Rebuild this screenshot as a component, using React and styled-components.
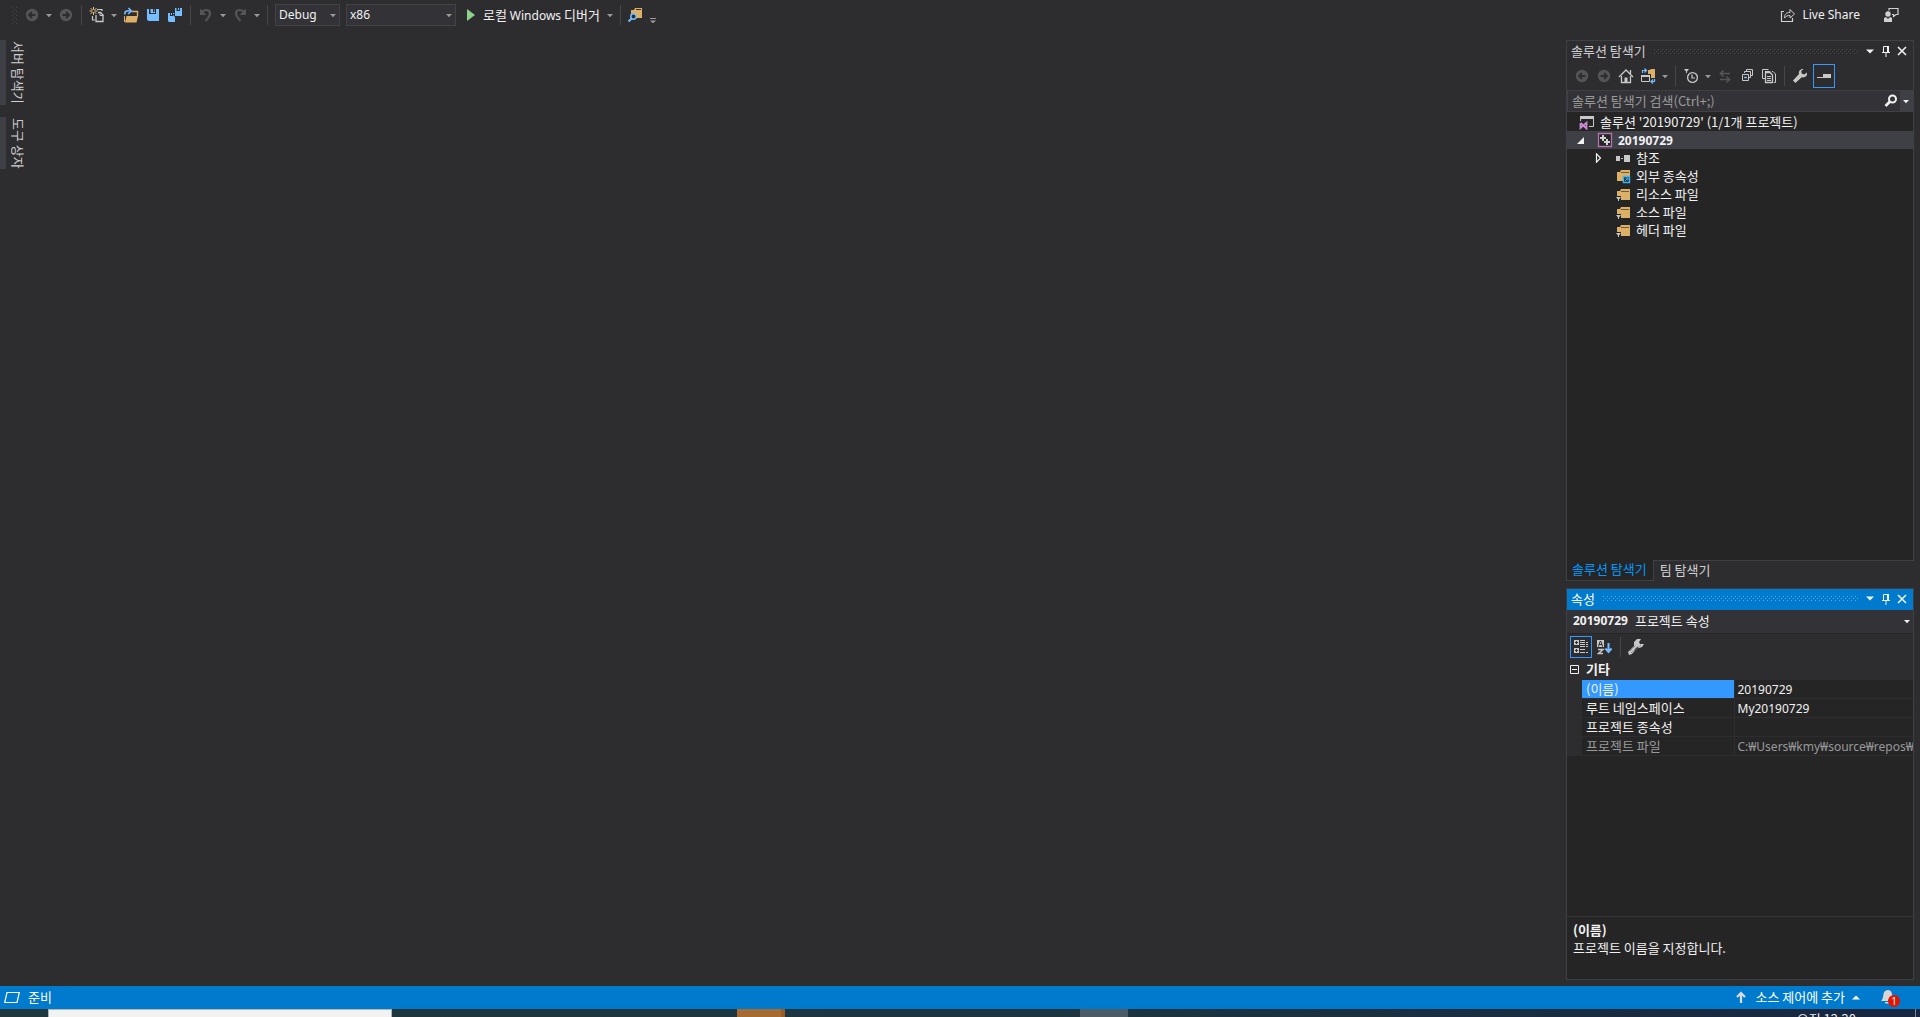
import React from "react";
import styled, { createGlobalStyle, css } from "styled-components";

const GlobalStyle = createGlobalStyle`
  * {
    box-sizing: border-box;
  }

  body {
    margin: 0;
    overflow: hidden;
    background: #2d2d30;
    color: #f1f1f1;
    font: 13px/18px "Noto Sans CJK KR", "Noto Sans", sans-serif;
  }

  button,
  input,
  select {
    margin: 0;
    padding: 0;
    border: 0;
    border-radius: 0;
    background: none;
    color: inherit;
    font: inherit;
  }

  ul {
    margin: 0;
    padding: 0;
    list-style: none;
  }
`;

const Page = styled.div`
  display: flex;
  flex-direction: column;
  height: 100vh;
  overflow: hidden;
`;

const Latin = styled.span`
  font-family: "Noto Sans", sans-serif;
  font-size: 12px;
  line-height: 12px;
`;

/* ---------- toolbars ---------- */

const Toolbar = styled.div`
  display: flex;
  align-items: center;
  flex: none;
  gap: 4px;
  height: ${({ $height }) => $height}px;
  padding: 0 ${({ $inset }) => $inset || 6}px;
`;

const MainToolbar = styled(Toolbar)`
  padding: 0 20px 0 12px;
`;

const dots = css`
  background-image: conic-gradient(from 270deg at 1px 1px, ${({ $dot }) => $dot} 90deg, transparent 0),
    conic-gradient(from 270deg at 1px 1px, ${({ $dot }) => $dot} 90deg, transparent 0);
  background-size: 4px 4px;
  background-position: 0 0, 2px 2px;
`;

const ToolbarGrip = styled.span`
  width: 5px;
  height: 17px;
  margin-right: 2px;
  ${dots}
`;

const IconButton = styled.button`
  display: flex;
  align-items: center;
  justify-content: center;
  flex: none;
  width: ${({ $width }) => $width || 18}px;
  height: 22px;
`;

const ToggleButton = styled(IconButton)`
  width: 22px;
  height: ${({ $height }) => $height || 24}px;
  border: 1px solid #3399ff;
`;

const Separator = styled.span`
  flex: none;
  width: 1px;
  height: 20px;
  margin: 0 2px;
  background: #46464a;
`;

const Combo = styled.label`
  display: grid;
  align-items: center;
  width: ${({ $width }) => $width}px;
  height: 22px;
  margin: 0 1px;
  border: 1px solid #434346;
  background: #333337;

  select,
  svg {
    grid-area: 1 / 1;
  }

  select {
    width: 100%;
    height: 20px;
    padding-left: 3px;
    appearance: none;
    font: 12px/18px "Noto Sans", sans-serif;
  }

  svg {
    justify-self: end;
    margin-right: 2px;
    pointer-events: none;
  }
`;

const TextButton = styled.button`
  display: flex;
  align-items: center;
  gap: 6px;
  height: 22px;
  padding-left: 6px;
  white-space: nowrap;
`;

const AccountArea = styled.div`
  display: flex;
  align-items: center;
  gap: 22px;
  margin-left: auto;
`;

/* ---------- work area ---------- */

const Main = styled.main`
  display: flex;
  flex: 1;
  min-height: 0;
  padding: 10px 6px 6px 0;
`;

const Rail = styled.nav`
  display: flex;
  flex-direction: column;
  gap: 12px;
`;

const RailTab = styled.button`
  padding: 1px 0 1px 4px;
  border-left: 6px solid #3f3f46;
  color: #d0d0d0;
  line-height: 16px;
  writing-mode: vertical-rl;
  text-orientation: sideways;
  text-align: left;
`;

const Documents = styled.div`
  flex: 1;
`;

const Dock = styled.aside`
  display: flex;
  flex-direction: column;
  gap: 6px;
  width: 348px;
`;

const DockGroup = styled.section`
  display: flex;
  flex-direction: column;
  flex: ${({ $share }) => $share} 1 0;
  min-height: 0;
`;

const Panel = styled.div`
  display: flex;
  flex-direction: column;
  flex: 1;
  min-height: 0;
  border: 1px solid #3f3f46;
`;

const PanelTitle = styled.header`
  display: flex;
  align-items: center;
  flex: none;
  height: 21px;
  padding: 0 3px 1px 4px;
  background: ${({ $active }) => ($active ? "#007acc" : "transparent")};
  color: ${({ $active }) => ($active ? "#ffffff" : "#d0d0d0")};
`;

const Grip = styled.span`
  flex: 1;
  height: 5px;
  margin: 0 4px 0 8px;
  ${dots}
`;

const SearchBox = styled.label`
  display: flex;
  align-items: center;
  flex: none;
  height: 22px;
  border: 1px solid #3f3f46;
  background: #333337;

  input {
    flex: 1;
    min-width: 0;
    height: 18px;
    padding-left: 4px;
    outline: none;
  }

  input::placeholder {
    color: #999999;
    opacity: 1;
  }
`;

const SearchOptions = styled(IconButton)`
  width: 12px;
  height: 20px;
  background: #3f3f46;
`;

const Tree = styled.ul`
  flex: 1;
  padding-top: 1px;
  background: #252526;
`;

const TreeRow = styled.li`
  display: flex;
  align-items: center;
  gap: 5px;
  height: 18px;
  padding-left: ${({ $depth }) => ($depth ? 18 * $depth - 9 : 12)}px;
  background: ${({ $selected }) => ($selected ? "#3f3f46" : "transparent")};
  font-weight: ${({ $selected }) => ($selected ? 700 : 400)};
  white-space: nowrap;
`;

const Twisty = styled.span`
  display: flex;
  align-items: center;
  width: 16px;
`;

const Tabs = styled.div`
  display: flex;
  flex: none;
  height: 21px;
`;

const Tab = styled.button`
  height: 21px;
  margin-top: ${({ $active }) => ($active ? -1 : 0)}px;
  padding: 0 6px 2px 5px;
  border: 1px solid ${({ $active }) => ($active ? "#3f3f46" : "transparent")};
  border-top: 0;
  background: ${({ $active }) => ($active ? "#252526" : "transparent")};
  color: ${({ $active }) => ($active ? "#0097fb" : "#d0d0d0")};
`;

/* ---------- properties ---------- */

const ObjectPicker = styled.button`
  display: flex;
  align-items: center;
  flex: none;
  gap: 7px;
  height: 24px;
  padding: 0 2px 0 6px;
  border-bottom: 1px solid #252526;
  background: #333337;

  svg {
    margin-left: auto;
  }
`;

const GridArea = styled.div`
  flex: 1;
  min-height: 0;
  overflow: hidden;
  background: #252526;
`;

const PropertyTable = styled.table`
  width: 100%;
  table-layout: fixed;
  border-collapse: collapse;
  text-align: left;
  white-space: nowrap;

  th,
  td {
    overflow: hidden;
    height: 19px;
    padding: 0 0 0 4px;
    border-bottom: 1px solid #2d2d30;
    font-weight: 400;
    line-height: 18px;
  }
`;

const GutterColumn = styled.col`
  width: 15px;
`;

const NameColumn = styled.col`
  width: 152px;
`;

const CategoryRow = styled.tr`
  background: #2d2d30;

  th {
    height: 20px;
    font-weight: 700;
  }

  td {
    padding: 0 0 0 3px;
  }
`;

const Expander = styled.button`
  display: block;
  height: 9px;
  line-height: 0;
`;

const PropertyRow = styled.tr`
  color: ${({ $dim }) => ($dim ? "#999999" : "#f1f1f1")};

  td:first-child {
    background: #2d2d30;
  }

  td:last-child {
    padding-left: 3px;
  }

  th {
    border-right: 1px solid #2d2d30;
    background: ${({ $selected }) => ($selected ? "#3399ff" : "#252526")};
  }
`;

const Description = styled.div`
  flex: none;
  height: 63px;
  padding: 4px 6px;
  border-top: 1px solid #333337;
  background: #252526;

  strong {
    display: block;
  }
`;

/* ---------- bottom bars ---------- */

const StatusBar = styled.footer`
  display: flex;
  align-items: center;
  flex: none;
  gap: 8px;
  height: 23px;
  padding: 0 20px 1px 4px;
  background: #007acc;
  color: #ffffff;
`;

const StatusButton = styled.button`
  display: flex;
  align-items: center;
  gap: 7px;
  height: 22px;
  margin-left: auto;
`;

const BellButton = styled.button`
  position: relative;
  width: 20px;
  height: 20px;
  margin-left: 12px;
  line-height: 0;
  text-align: left;
`;

const Badge = styled.span`
  position: absolute;
  right: 0;
  bottom: 0;
  width: 12px;
  height: 12px;
  border-radius: 6px;
  background: #e51400;
  font: 10px/12px "Noto Sans", sans-serif;
  text-align: center;
`;

const Taskbar = styled.div`
  display: flex;
  flex: none;
  height: 8px;
  overflow: hidden;
  background: linear-gradient(90deg, #21373e, #1e3540 55%, #18263f);
`;

const TaskSearch = styled.input`
  width: 344px;
  height: 40px;
  margin-left: 48px;
  border: 1px solid #b4b4b4;
  background: #f2f2f2;
`;

const TaskButton = styled.button`
  width: 48px;
  height: 40px;
  margin-left: ${({ $before }) => $before}px;
  border-right: ${({ $edge }) => ($edge ? `4px solid ${$edge}` : 0)};
  background: ${({ $color }) => $color};
`;

const Clock = styled.time`
  height: 40px;
  margin-left: auto;
  padding: 2px 59px 0 0;
  line-height: 16px;
`;

const ShowDesktop = styled.button`
  width: 5px;
  height: 40px;
  border-left: 1px solid #7d8794;
`;

/* ---------- icons ---------- */

const Icon = ({ size = 16, children }) => (
  <svg width={size} height={size} viewBox={`0 0 ${size} ${size}`} fill="none" aria-hidden="true">
    {children}
  </svg>
);

const Caret = ({ color = "#999999", up, wide }) => (
  <svg width="8" height="5" viewBox="0 0 8 5" aria-hidden="true">
    <path d={up ? "M0 4.500L4 .5l4 4z" : wide ? "M0 .5h8l-4 4z" : "M1 1h6L4 4.200z"} fill={color} />
  </svg>
);

const ArrowCircle = ({ right }) => (
  <Icon>
    <circle cx="8" cy="8" r="6.200" fill="#555558" />
    <path
      d={right ? "M4.500 8h6M8 5l3 3-3 3" : "M11.500 8h-6M8 5L5 8l3 3"}
      stroke="#2d2d30"
      strokeWidth="1.800"
    />
  </Icon>
);

const NewIcon = () => (
  <Icon>
    <path d="M8 2.500h5V4M3.500 9v4H6" stroke="#c8c8c8" strokeWidth="1.200" />
    <path d="M7 8V14.500h7V8l-2.500-2.500H9" stroke="#c8c8c8" strokeWidth="1.300" />
    <path d="M11 5v3.500h3.500" stroke="#c8c8c8" />
    <path d="M4.500 0v8M.5 4h8M1.700 1.200l5.600 5.600M7.300 1.200L1.700 6.800" stroke="#f0c987" />
    <circle cx="4.500" cy="4" r="1.200" fill="#2d2d30" />
  </Icon>
);

const OpenIcon = () => (
  <Icon>
    <path d="M9 4.500h5.500V9" stroke="#dcb067" strokeWidth="1.400" />
    <path d="M1.500 15V9" stroke="#dcb067" />
    <path d="M3.500 9H15l-1.500 6.500H2z" fill="#dcb067" />
    <path d="M2 7.500C1 4.500 4 3 8 4.200M5.500 1l3 3-3.500 3" stroke="#75beff" strokeWidth="1.500" />
  </Icon>
);

const SaveIcon = () => (
  <Icon>
    <path d="M2 2h2v5h7V2h3v12H3.500L2 12.500z" fill="#75beff" />
    <path d="M5.500 2H8v2h1V2h1v4H5.500z" fill="#75beff" />
    <path d="M8 2h1.500v3H8z" fill="#2d2d30" />
  </Icon>
);

const SaveAllIcon = () => (
  <Icon>
    <path d="M1 6h2v3h3V6h2v9H2l-1-1z" fill="#75beff" />
    <path d="M8 1h1.500v3H13V1h2v8H8z" fill="#75beff" />
    <path d="M4 6h1v2H4zM11 1h1v2h-1z" fill="#75beff" />
    <path d="M5.500 7.500L8 10V6z" fill="#2d2d30" />
  </Icon>
);

const UndoIcon = ({ flip }) => (
  <Icon>
    <g transform={flip ? "translate(16 0) scale(-1 1)" : undefined}>
      <path d="M3.500 5.500C6 2 12 2 12 6.500c0 3-2 4.500-4.500 7.500" stroke="#555558" strokeWidth="2.200" />
      <path d="M2 1.500V8h6.500z" fill="#555558" />
    </g>
  </Icon>
);

const PlayIcon = () => (
  <svg width="10" height="14" viewBox="0 0 10 14" aria-hidden="true">
    <path d="M0 1l8 6-8 6z" fill="#8dd28a" />
  </svg>
);

const FindInFilesIcon = () => (
  <Icon>
    <path d="M3 3h3l1-2h7v10H3z" fill="#dcb067" />
    <path d="M8 2.500h5" stroke="#2d2d30" />
    <circle cx="5.500" cy="9.500" r="2.700" fill="#2d2d30" stroke="#75beff" strokeWidth="1.500" />
    <path d="M3.700 11.500L.5 14.500" stroke="#75beff" strokeWidth="2" />
  </Icon>
);

const OverflowIcon = () => (
  <svg width="8" height="16" viewBox="0 0 8 16" aria-hidden="true">
    <path d="M1 11.500h6" stroke="#999999" />
    <path d="M1 13.500h6L4 16.500z" fill="#999999" />
  </svg>
);

const ShareIcon = () => (
  <Icon>
    <path d="M4 4.500H1.500v10h11V11" stroke="#d0d0d0" strokeWidth="1.200" />
    <path d="M4.500 11c0-4 2-5.500 5.500-5.500V2.500l4.500 4.500-4.500 4V8.500C7.500 8.500 6 9 4.500 11z" stroke="#d0d0d0" />
  </Icon>
);

const FeedbackIcon = () => (
  <Icon>
    <circle cx="5" cy="7" r="2.700" fill="#d0d0d0" />
    <path d="M1 15v-4l2-1 2 2 2-2 2 1v4z" fill="#d0d0d0" />
    <path d="M6 3.500v-2h9v6h-2l-2.500 2V7.500H9" stroke="#d0d0d0" strokeWidth="1.200" />
  </Icon>
);

const PinIcon = () => (
  <Icon size={12}>
    <path d="M3.500 7V1.500h5V7M2 7.500h8M6 8v4" stroke="#f1f1f1" />
    <path d="M7 1h2v6H7z" fill="#f1f1f1" />
  </Icon>
);

const CloseIcon = () => (
  <Icon size={12}>
    <path d="M2 2l8 8M10 2l-8 8" stroke="#f1f1f1" strokeWidth="1.600" />
  </Icon>
);

const HomeIcon = () => (
  <Icon>
    <path d="M1 9l7-7 7 7M12.500 6V2" stroke="#c8c8c8" strokeWidth="1.300" />
    <path d="M3.500 8v6.500h9V8" stroke="#c8c8c8" strokeWidth="1.300" />
    <path d="M6.500 9.500h3V15h-3z" fill="#c8c8c8" />
  </Icon>
);

const SwitchViewIcon = () => (
  <Icon>
    <path d="M8 2h2l1-1h4v9h-4V6H8z" fill="#dcb067" />
    <path d="M1.500 7.500h8v6h-8z" stroke="#c8c8c8" />
    <path d="M1 7h9v2H1z" fill="#c8c8c8" />
    <path d="M2.500 5V2.500H6M4.500 .5l2 2-2 2M14.500 11v2.500H11M13 11.500l-2 2 2 2" stroke="#75beff" strokeWidth="1.200" />
  </Icon>
);

const PendingIcon = () => (
  <Icon>
    <path d="M1 1h5L4 3.500V5H3V3.500z" fill="#c8c8c8" />
    <circle cx="9.500" cy="9.500" r="4.900" stroke="#c8c8c8" strokeWidth="1.300" />
    <path d="M9 6.500V10h3" stroke="#c8c8c8" strokeWidth="1.200" />
  </Icon>
);

const SyncIcon = () => (
  <Icon>
    <path d="M13 5.500H4M6.500 2.500l-3 3 3 3M3 11.500h9M9.500 8.500l3 3-3 3" stroke="#555558" strokeWidth="1.700" />
  </Icon>
);

const CollapseIcon = () => (
  <Icon>
    <path d="M7.500 3V1.500h6v6H12M5.500 5V3.500h6v6H10M3.500 6.500h6v6h-6z" stroke="#c8c8c8" />
    <path d="M5 9.500h3" stroke="#75beff" strokeWidth="1.400" />
  </Icon>
);

const ShowAllIcon = () => (
  <Icon>
    <path d="M4 10.500H1.500v-9h6M4 3.500h5l1 1M11 3.500h1l2.500 2.500v8.500H13" stroke="#c8c8c8" />
    <path d="M4.500 4.500H9l2.500 2.500v7.500h-7z" stroke="#c8c8c8" strokeWidth="1.300" />
    <path d="M6 8.500h4M6 10.500h4M6 12.500h4" stroke="#c8c8c8" />
  </Icon>
);

const WrenchIcon = () => (
  <Icon>
    <path d="M14.800 4.500l-2.500 2-2.600-1-.4-2.400L11.500 1C8.500 .5 6.300 3 7 6L1 12.500 3.300 15l6.500-5.700c3.500 .8 6-1.800 5-4.800z" fill="#c8c8c8" />
  </Icon>
);

const PreviewIcon = () => (
  <Icon>
    <path d="M1 9.500h6" stroke="#c8c8c8" />
    <path d="M7 6h8v4H7z" fill="#c8c8c8" />
  </Icon>
);

const SearchIcon = () => (
  <Icon>
    <circle cx="9.500" cy="6" r="3.500" stroke="#f1f1f1" strokeWidth="2" />
    <path d="M7 8.500L2.500 13" stroke="#f1f1f1" strokeWidth="2.600" />
  </Icon>
);

const SolutionIcon = () => (
  <Icon>
    <path d="M1.500 7V2.500h13v10H10" stroke="#c8c8c8" />
    <path d="M1 2h14v3H1z" fill="#c8c8c8" />
    <path d="M1.500 9v5L7.500 8.700v5.800L1.500 9" stroke="#cb8ad6" strokeWidth="1.800" />
  </Icon>
);

const ProjectIcon = () => (
  <Icon>
    <path d="M1.500 1.500h13v13h-13z" fill="#252526" stroke="#b573b0" strokeWidth="1.300" />
    <path d="M3 6h6M6 3v6M7 10h6M10 7v6" stroke="#d0d0d0" strokeWidth="2" />
  </Icon>
);

const ReferencesIcon = () => (
  <Icon>
    <path d="M1 6h4v5H1zM9 5h6v7H9z" fill="#c8c8c8" />
    <path d="M6 8.500h2" stroke="#c8c8c8" />
  </Icon>
);

const FolderIcon = ({ external }) => (
  <Icon>
    <path d={external ? "M2 4h3l1-2h9v11H2z" : "M2 5h3l1-2h9v11H2z"} fill="#dcb067" />
    <path d={external ? "M6 4.500h8" : "M6 5.500h8"} stroke="#6b5a3c" />
    {external ? (
      <>
        <path d="M8.500 8.500h6v6h-6z" fill="#252526" stroke="#3db4f2" strokeWidth="1.400" />
        <path d="M10 13l3-3M10.500 10H13v2.500" stroke="#3db4f2" />
      </>
    ) : (
      <>
        <path d="M0 10h6v6H0z" fill="#252526" />
        <path d="M1 11h5L4 13.500V15H3v-1.500z" fill="#c8c8c8" />
      </>
    )}
  </Icon>
);

const ExpandedIcon = () => (
  <Icon size={9}>
    <path d="M8 1v7H1z" fill="#f1f1f1" />
  </Icon>
);

const CollapsedIcon = () => (
  <Icon size={10}>
    <path d="M2.500 .8v8.400L6.500 5z" stroke="#f1f1f1" strokeWidth="1.200" />
  </Icon>
);

const CategorizedIcon = () => (
  <Icon>
    <path d="M1 1h5v5H1zM1 9h5v5H1z" fill="#c8c8c8" />
    <path d="M2 3.500h3M3.500 2v3M2 11.500h3M3.500 10v3" stroke="#2d2d30" />
    <path d="M7 1.500h5M7 3.500h5M7 5.500h5M7 7.500h5M7 10.500h5M7 13.500h5M13 3.500h2M13 5.500h2M13 7.500h2M13 13.500h2" stroke="#c8c8c8" />
  </Icon>
);

const AlphabeticalIcon = () => (
  <Icon>
    <path d="M0 1h7v7H0z" fill="#c8c8c8" />
    <path d="M1.500 7.500L3 2.500h1l1.500 5M2 5.500h3" stroke="#2d2d30" />
    <path d="M1 10.500h5l-4.500 4H6" stroke="#c8c8c8" strokeWidth="1.500" />
    <path d="M11.500 4v9M8.500 9.500l3 3.500 3-3.500" stroke="#75beff" strokeWidth="2" />
  </Icon>
);

const PropertyPagesIcon = () => (
  <Icon>
    <path d="M16 5l-2 3-3 1-2-1-5 7-3 1-1-3 6-6V3l3-3h4l-2 3 1 2z" fill="#c8c8c8" />
    <path d="M3 14l7-7M5 14l8-8M2 12l6-6" stroke="#6b6b6e" strokeDasharray="1 1" />
  </Icon>
);

const MinusBox = () => (
  <Icon size={9}>
    <path d="M.5 .5h8v8h-8zM2 4.500h5" stroke="#f1f1f1" />
  </Icon>
);

const ReadyIcon = () => (
  <Icon>
    <path d="M3 3.500h12.300L13 13.500H.7z" stroke="#ffffff" strokeWidth="1.200" />
  </Icon>
);

const PublishIcon = () => (
  <Icon>
    <path d="M9 14V4M5 8l4-4 4 4" stroke="#dcdcdc" strokeWidth="2.200" />
  </Icon>
);

const BellIcon = () => (
  <Icon>
    <path d="M1 12c2-2 2-4 2.500-7C4 2 6 1 8 1s3.500 1 4 4l1 7zM5 13h5v1.500H5z" fill="#d6d6d6" />
  </Icon>
);

/* ---------- data ---------- */

const TREE = [
  { depth: 0, label: "솔루션 '20190729' (1/1개 프로젝트)", icon: <SolutionIcon /> },
  { depth: 1, label: <Latin>20190729</Latin>, icon: <ProjectIcon />, twisty: <ExpandedIcon />, selected: true },
  { depth: 2, label: "참조", icon: <ReferencesIcon />, twisty: <CollapsedIcon /> },
  { depth: 2, label: "외부 종속성", icon: <FolderIcon external /> },
  { depth: 2, label: "리소스 파일", icon: <FolderIcon /> },
  { depth: 2, label: "소스 파일", icon: <FolderIcon /> },
  { depth: 2, label: "헤더 파일", icon: <FolderIcon /> },
];

const PROPERTIES = [
  { name: "(이름)", value: "20190729", selected: true },
  { name: "루트 네임스페이스", value: "My20190729" },
  { name: "프로젝트 종속성", value: "" },
  { name: "프로젝트 파일", value: "C:₩Users₩kmy₩source₩repos₩2", dim: true },
];

const TitleBar = ({ title, active }) => (
  <PanelTitle $active={active}>
    {title}
    <Grip $dot={active ? "#59a8de" : "#46464a"} />
    <IconButton $width={16} aria-label="창 위치">
      <Caret color="#f1f1f1" wide />
    </IconButton>
    <IconButton $width={16} aria-label="자동 숨기기">
      <PinIcon />
    </IconButton>
    <IconButton $width={16} aria-label="닫기">
      <CloseIcon />
    </IconButton>
  </PanelTitle>
);

const Tool = ({ label, children }) => (
  <IconButton aria-label={label}>{children}</IconButton>
);

const More = ({ label }) => (
  <IconButton $width={8} aria-label={label}>
    <Caret />
  </IconButton>
);

const StandardToolbar = () => (
  <MainToolbar $height={30}>
    <ToolbarGrip $dot="#46464a" />
    <Tool label="뒤로">
      <ArrowCircle />
    </Tool>
    <More label="뒤로 목록" />
    <Tool label="앞으로">
      <ArrowCircle right />
    </Tool>
    <Separator />
    <Tool label="새 프로젝트">
      <NewIcon />
    </Tool>
    <More label="새로 만들기 목록" />
    <Tool label="파일 열기">
      <OpenIcon />
    </Tool>
    <Tool label="저장">
      <SaveIcon />
    </Tool>
    <Tool label="모두 저장">
      <SaveAllIcon />
    </Tool>
    <Separator />
    <Tool label="실행 취소">
      <UndoIcon />
    </Tool>
    <More label="실행 취소 목록" />
    <Tool label="다시 실행">
      <UndoIcon flip />
    </Tool>
    <More label="다시 실행 목록" />
    <Separator />
    <Combo $width={65}>
      <select aria-label="솔루션 구성" defaultValue="Debug">
        <option>Debug</option>
        <option>Release</option>
      </select>
      <Caret />
    </Combo>
    <Combo $width={110}>
      <select aria-label="솔루션 플랫폼" defaultValue="x86">
        <option>x86</option>
        <option>x64</option>
      </select>
      <Caret />
    </Combo>
    <TextButton>
      <PlayIcon />
      <span>
        로컬 <Latin>Windows</Latin> 디버거
      </span>
      <Caret />
    </TextButton>
    <Separator />
    <Tool label="파일에서 찾기">
      <FindInFilesIcon />
    </Tool>
    <IconButton $width={8} aria-label="도구 모음 옵션">
      <OverflowIcon />
    </IconButton>
    <AccountArea>
      <TextButton>
        <ShareIcon />
        <Latin>Live Share</Latin>
      </TextButton>
      <Tool label="피드백 보내기">
        <FeedbackIcon />
      </Tool>
    </AccountArea>
  </MainToolbar>
);

const SolutionExplorer = () => (
  <DockGroup $share={29}>
    <Panel>
      <TitleBar title="솔루션 탐색기" />
      <Toolbar $height={28}>
        <Tool label="뒤로">
          <ArrowCircle />
        </Tool>
        <Tool label="앞으로">
          <ArrowCircle right />
        </Tool>
        <Tool label="홈">
          <HomeIcon />
        </Tool>
        <Tool label="보기 전환">
          <SwitchViewIcon />
        </Tool>
        <More label="보기 목록" />
        <Separator />
        <Tool label="보류 중인 변경 내용 필터">
          <PendingIcon />
        </Tool>
        <More label="필터 목록" />
        <Tool label="활성 문서와 동기화">
          <SyncIcon />
        </Tool>
        <Tool label="모두 축소">
          <CollapseIcon />
        </Tool>
        <Tool label="모든 파일 표시">
          <ShowAllIcon />
        </Tool>
        <Separator />
        <Tool label="속성">
          <WrenchIcon />
        </Tool>
        <ToggleButton aria-label="선택한 항목 미리 보기" aria-pressed="true">
          <PreviewIcon />
        </ToggleButton>
      </Toolbar>
      <SearchBox>
        <input type="text" placeholder="솔루션 탐색기 검색(Ctrl+;)" aria-label="솔루션 탐색기 검색" />
        <Tool label="검색">
          <SearchIcon />
        </Tool>
        <SearchOptions aria-label="검색 옵션">
          <Caret color="#f1f1f1" />
        </SearchOptions>
      </SearchBox>
      <Tree>
        {TREE.map(({ depth, label, icon, twisty, selected }, index) => (
          <TreeRow key={index} $depth={depth} $selected={selected}>
            {depth > 0 && <Twisty>{twisty}</Twisty>}
            {icon}
            <span>{label}</span>
          </TreeRow>
        ))}
      </Tree>
    </Panel>
    <Tabs>
      <Tab $active>솔루션 탐색기</Tab>
      <Tab>팀 탐색기</Tab>
    </Tabs>
  </DockGroup>
);

const PropertiesWindow = () => (
  <DockGroup $share={21}>
    <Panel>
      <TitleBar title="속성" active />
      <ObjectPicker aria-haspopup="listbox">
        <Latin as="strong">20190729</Latin>
        <span>프로젝트 속성</span>
        <Caret color="#f1f1f1" />
      </ObjectPicker>
      <Toolbar $height={26} $inset={3}>
        <ToggleButton $height={22} aria-label="항목별" aria-pressed="true">
          <CategorizedIcon />
        </ToggleButton>
        <Tool label="사전순">
          <AlphabeticalIcon />
        </Tool>
        <Separator />
        <Tool label="속성 페이지">
          <PropertyPagesIcon />
        </Tool>
      </Toolbar>
      <GridArea>
        <PropertyTable>
          <colgroup>
            <GutterColumn />
            <NameColumn />
            <col />
          </colgroup>
          <tbody>
            <CategoryRow>
              <td>
                <Expander aria-label="기타 축소">
                  <MinusBox />
                </Expander>
              </td>
              <th colSpan={2}>기타</th>
            </CategoryRow>
            {PROPERTIES.map(({ name, value, selected, dim }) => (
              <PropertyRow key={name} $selected={selected} $dim={dim}>
                <td />
                <th scope="row">{name}</th>
                <td>
                  <Latin>{value}</Latin>
                </td>
              </PropertyRow>
            ))}
          </tbody>
        </PropertyTable>
      </GridArea>
      <Description>
        <strong>(이름)</strong>
        프로젝트 이름을 지정합니다.
      </Description>
    </Panel>
  </DockGroup>
);

const App = () => (
  <Page>
    <GlobalStyle />
    <StandardToolbar />
    <Main>
      <Rail>
        <RailTab>서버 탐색기</RailTab>
        <RailTab>도구 상자</RailTab>
      </Rail>
      <Documents />
      <Dock>
        <SolutionExplorer />
        <PropertiesWindow />
      </Dock>
    </Main>
    <StatusBar>
      <ReadyIcon />
      <span>준비</span>
      <StatusButton>
        <PublishIcon />
        소스 제어에 추가
        <Caret color="#ffffff" up />
      </StatusButton>
      <BellButton aria-label="알림">
        <BellIcon />
        <Badge>1</Badge>
      </BellButton>
    </StatusBar>
    <Taskbar>
      <TaskSearch type="text" aria-label="Windows 검색" />
      <TaskButton $before={345} $color="#a66a33" $edge="#9a5c26" aria-label="앱 1" />
      <TaskButton $before={295} $color="#4d5b66" aria-label="앱 2" />
      <Clock>오전 12:20</Clock>
      <ShowDesktop aria-label="바탕 화면 보기" />
    </Taskbar>
  </Page>
);

export default App;
